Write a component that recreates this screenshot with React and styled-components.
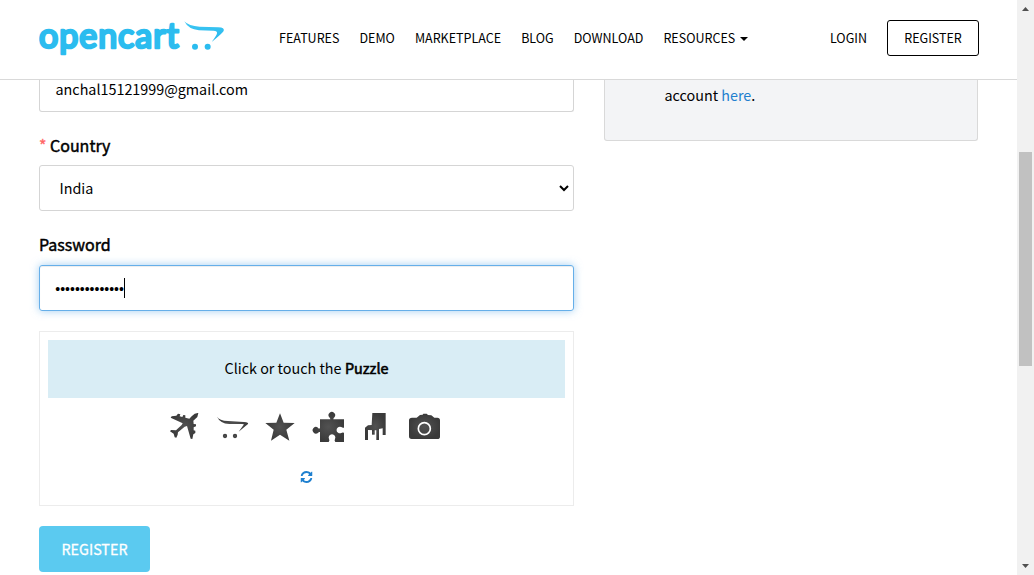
import React from "react";
import styled, { createGlobalStyle } from "styled-components";

const Global = createGlobalStyle`
  * { box-sizing: border-box; }
  body { margin: 0; background: #fff; color: #000; overflow: hidden; font-family: "Noto Sans CJK SC", "Open Sans", sans-serif; font-size: 14.35px; }
`;
const Window = styled.div`display: flex; width: 1034px; height: 575px; overflow: hidden;`;
const Page = styled.div`width: 1017px; height: 575px; overflow: hidden;`;
const Header = styled.header`
  display: flex; align-items: center; height: 80px; padding: 0 38px 4px 39px;
  border-bottom: 1px solid #d9d9d9;
`;
const Logo = styled.svg`display: block; width: 190px; height: 50px; margin-top: -6px; flex: none;`;
const Nav = styled.nav`display: flex; gap: 20px; margin-left: 50px; flex: 1;`;
const NavLink = styled.a`
  display: flex; align-items: center; font-size: 12.52px; line-height: 20px; white-space: nowrap;
`;
const Caret = styled.i`border: 4px solid transparent; border-top-color: #000; border-bottom: 0; margin: 3px 0 0 5px;`;
const HeaderButton = styled.a`
  display: flex; align-items: center; justify-content: center; width: 92px; height: 36px; margin-left: 20px;
  border: 1px solid #000; border-radius: 3px; font-size: 12.52px;
`;
const Main = styled.main`display: flex; align-items: flex-start; gap: 30px; padding-left: 39px;`;
const Form = styled.form`display: flex; flex-direction: column; width: 535px;`;
const Field = styled.div`
  display: flex; align-items: center; height: 46px; padding: 0 ${(p) => (p.$select ? 4 : 16)}px 2px ${(p) => (p.$select ? 19.5 : 15.5)}px;
  border: 1px solid #d5d5d5; border-radius: 3px;
`;
const EmailField = styled(Field)`height: 32px; border-top: 0; border-radius: 0 0 3px 3px; padding-bottom: 14px;`;
const PasswordField = styled(Field)`
  border-color: #66afe9; box-shadow: inset 0 1px 1px rgba(0,0,0,.075), 0 0 8px rgba(102,175,233,.6);
  font-family: "Liberation Sans", sans-serif; font-size: 14px; padding: 2px 16px 0 15.3px;
`;
const TextCaret = styled.i`width: 1px; height: 20px; margin-bottom: 2px; background: #000;`;
const Chevron = styled.svg`width: 10px; height: 8px; margin: 2px 0 0 auto;`;
const Label = styled.label`
  display: flex; gap: 4px; font-size: 16px; line-height: 24px; margin: ${(p) => p.$top}px 0 ${(p) => p.$bottom}px;
  -webkit-text-stroke: .45px currentColor;
`;
const Required = styled.span`width: 7px; color: #f66; font-size: 16px; -webkit-text-stroke: .3px #f66;`;
const Captcha = styled.section`height: 175px; margin-top: 20px; padding: 8px; border: 1px solid #ececec;`;
const Prompt = styled.div`
  display: flex; align-items: center; justify-content: center; gap: 3.5px; height: 58px; padding-bottom: 3px; background: #d9edf5;
`;
const Strong = styled.b`font-weight: 400; -webkit-text-stroke: .6px #000;`;
const Choices = styled.div`display: flex; justify-content: center; padding: 2px 5px 0 0;`;
const Choice = styled.svg`display: block; width: 48px; height: 50px;`;
const Refresh = styled.svg`display: block; width: 12px; height: 12px; margin: 21px auto 0; transform: translateX(-.5px);`;
const Submit = styled.button`
  width: 111px; height: 46px; margin-top: 20px; padding: 0 0 2px; border: 0; border-radius: 4px; background: #5bcaf0;
  color: #fff; font: 14.35px "Noto Sans CJK SC", sans-serif; -webkit-text-stroke: .3px #fff;
`;
const Notice = styled.aside`
  width: 374px; height: 61px; padding: 3px 0 0 59.5px; border: 1px solid #d9d9d9; border-top: 0;
  border-radius: 0 0 3px 3px; background: #f3f4f6; line-height: 24px;
`;
const Link = styled.a`color: #1f80cf;`;
const Scrollbar = styled.div`
  display: flex; flex-direction: column; align-items: center; justify-content: space-between;
  width: 17px; height: 575px; padding: 7px 0; background: #f1f1f1;
`;
const Thumb = styled.div`width: 13px; height: 214px; background: #c1c1c1; margin-bottom: 58px;`;
const Arrow = styled.svg`width: 7px; height: 4px;`;

const icons = [
  ["0 0 144 150", <path d="M115 39Q105 38 95 49L88 56 76 53 76 46 70 45 67 51 59 49 61 43 54 41 49 47 35 49 32 53 68 70 65 75 48 91 33 90 30 94 41 101 44 112 49 113 53 104 54 97 74 80 81 78 92 116 97 117 100 103 106 99 106 92 101 91 101 82 108 79 108 73 101 72 100 62 112 51Z" />],
  ["144 0 144 150", <><path d="M171 50Q178 62 204 63L252 66Q267 67 264 72L236 95 250 76Q254 72 246 72L208 72Q180 70 171 50Z" /><circle cx="195" cy="108" r="6.5" /><circle cx="225" cy="108" r="6.5" /></>],
  ["288 0 144 150", <path d="M360 40 371 68 404 69 379 89 388 122 360 104 333 122 341 89 316 69 349 68Z" />],
  ["12 0 144 150", <path d="M60 58H91Q91 54 87 51A10 10 0 1 1 104 51Q100 54 100 58H132V83Q127 84 124 81A10 10 0 1 0 124 99Q127 96 132 98V126H106Q102 121 105 117A10 10 0 1 0 87 117Q90 121 86 126H60V96Q56 95 54 99A10 10 0 1 1 54 83Q56 87 60 85Z" />],
  ["156 0 144 150", <><path d="M217 39H257V105H248V85L237 87V120H229V91L204 90V120H195V83L204 76 215 75Z" /><path d="M216 90H224V104H216Z" /></>],
  ["300 0 144 150", <><path d="M336 53H350L360 45 368 44 370 41H380L384 45 394 46 403 53H412Q420 53 420 61V110Q420 117 412 117H335Q327 117 327 109V61Q327 53 336 53Z" /><circle cx="373" cy="86" r="18" fill="none" stroke="#fff" strokeWidth="5" /></>],
];

export default function App() {
  return (
    <Window>
      <Global />
      <Page>
        <Header>
          <Logo viewBox="27 0 570 150">
            <defs>
              <linearGradient id="sky" x1="0" y1="0" x2="0" y2="1"><stop stopColor="#40c8f4" /><stop offset="1" stopColor="#23b5eb" /></linearGradient>
            </defs>
            <text x="27" y="115" textLength="419" lengthAdjust="spacing" fontFamily="Lato, sans-serif" fontWeight="400" fontSize="102" fill="#2bbcef" stroke="#2bbcef" strokeWidth="8" strokeLinejoin="round">opencart</text>
            <path fill="url(#sky)" d="M463 34Q476 49 509 50L565 52Q585 53 581 63Q577 70 545 96Q560 77 561 70Q563 63 550 62L507 61Q475 58 463 34Z" />
            <circle cx="495" cy="110" r="9" fill="#2bbcef" /><circle cx="533" cy="110" r="9" fill="#2bbcef" />
          </Logo>
          <Nav>
            <NavLink>FEATURES</NavLink>
            <NavLink>DEMO</NavLink>
            <NavLink>MARKETPLACE</NavLink>
            <NavLink>BLOG</NavLink>
            <NavLink>DOWNLOAD</NavLink>
            <NavLink>RESOURCES<Caret /></NavLink>
          </Nav>
          <NavLink>LOGIN</NavLink>
          <HeaderButton>REGISTER</HeaderButton>
        </Header>
        <Main>
          <Form>
            <EmailField>anchal15121999@gmail.com</EmailField>
            <Label $top={21} $bottom={8}><Required>*</Required>Country</Label>
            <Field $select>India<Chevron viewBox="0 0 10 8"><path d="M1 2 5 6 9 2" fill="none" stroke="#000" strokeWidth="2" /></Chevron></Field>
            <Label $top={21} $bottom={9}>Password</Label>
            <PasswordField>••••••••••••••<TextCaret /></PasswordField>
            <Captcha>
              <Prompt><span>Click or touch the</span><Strong>Puzzle</Strong></Prompt>
              <Choices>
                {icons.map(([box, art]) => (
                  <Choice key={box} viewBox={box}>
                    <defs><radialGradient id="ink"><stop stopColor="#525252" /><stop offset="1" stopColor="#3a3a3a" /></radialGradient></defs>
                    <g fill="url(#ink)">{art}</g>
                  </Choice>
                ))}
              </Choices>
              <Refresh viewBox="0 0 1536 1536" fill="#1f80cf">
                <path d="M1511 928q0 5-1 7-64 268-268 434.500T764 1536q-146 0-282.500-55T238 1324l-129 129q-19 19-45 19t-45-19-19-45V960q0-26 19-45t45-19h448q26 0 45 19t19 45-19 45l-137 137q71 66 161 102t187 36q134 0 250-65t186-179q11-17 53-117 8-23 30-23h192q13 0 22.500 9.500t9.500 22.500zm25-800v448q0 26-19 45t-45 19h-448q-26 0-45-19t-19-45 19-45l138-138Q969 256 768 256q-134 0-250 65T332 500q-11 17-53 117-8 23-30 23H50q-13 0-22.500-9.500T18 608v-7q65-268 270-434.500T768 0q146 0 284 55.500T1297 212l130-129q19-19 45-19t45 19 19 45z" />
              </Refresh>
            </Captcha>
            <Submit type="button">REGISTER</Submit>
          </Form>
          <Notice>account <Link>here</Link>.</Notice>
        </Main>
      </Page>
      <Scrollbar>
        <Arrow viewBox="0 0 7 4"><path d="M0 4 3.500 0 7 4Z" fill="#505050" /></Arrow>
        <Thumb />
        <Arrow viewBox="0 0 7 4"><path d="M0 0 3.500 4 7 0Z" fill="#505050" /></Arrow>
      </Scrollbar>
    </Window>
  );
}
